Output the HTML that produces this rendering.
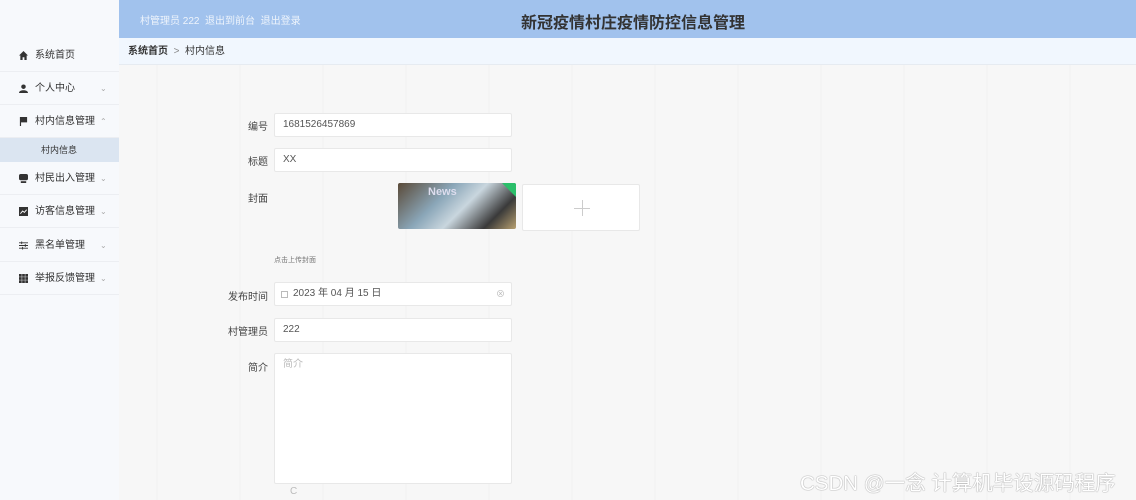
<!DOCTYPE html>
<html><head><meta charset="utf-8">
<style>
*{margin:0;padding:0;box-sizing:border-box}
body{width:1136px;height:500px;overflow:hidden;font-family:"Liberation Sans","Noto Sans CJK SC",sans-serif;background:#f6f6f6;position:relative}
.side{position:absolute;left:0;top:0;width:119px;height:500px;background:#f7f9fc}
.item{position:absolute;left:0;width:119px;height:33px;border-bottom:1px solid #eceef2;font-size:10px;color:#333;line-height:33px;padding-left:35px}
.item .ic{position:absolute;left:19px;top:12px;width:9px;height:9px}
.item .ar{position:absolute;left:100px;top:0;font-size:8px;color:#aaa}
.sub{position:absolute;left:0;top:138px;width:119px;height:24px;background:#dbe5f1;font-size:9px;color:#333;line-height:24px;padding-left:41px}
.head{position:absolute;left:119px;top:0;width:1017px;height:38px;background:#a1c2ed}
.head .l{position:absolute;left:21px;top:12px;font-size:10px;color:#eef4fc}
.head .t{position:absolute;left:402px;top:9px;font-size:16px;font-weight:bold;color:#333}
.bc{position:absolute;left:119px;top:38px;width:1017px;height:27px;background:#f1f7fe;border-bottom:1px solid #e6ebf1;font-size:10px;line-height:27px;padding-left:9px;color:#333}
.main{position:absolute;left:119px;top:65px;width:1017px;height:435px;background:
repeating-linear-gradient(90deg,rgba(0,0,0,0) 0 37px,rgba(0,0,0,.012) 37px 39px,rgba(0,0,0,0) 39px 83px),#f7f7f7}
.lab{position:absolute;font-size:10px;color:#444;text-align:right;width:60px}
.inp{position:absolute;left:274px;width:238px;height:24px;background:#fff;border:1px solid #e8e8e8;border-radius:2px;font-size:10px;color:#555;line-height:22px;padding-left:8px}
</style></head><body>
<div class="side">
<div class="item" style="top:39px"><svg class="ic" viewBox="0 0 10 10"><path d="M5 0L0 5h1.5v5h2.5V7h2v3h2.5V5H10z" fill="#333"/></svg>系统首页</div>
<div class="item" style="top:72px"><svg class="ic" viewBox="0 0 10 10"><circle cx="5" cy="3" r="2.5" fill="#333"/><path d="M0 10c0-4 10-4 10 0z" fill="#333"/></svg>个人中心<span class="ar">⌄</span></div>
<div class="item" style="top:105px"><svg class="ic" viewBox="0 0 10 10"><path d="M1 0v10h1.3V6H9V0z" fill="#333"/></svg>村内信息管理<span class="ar">⌃</span></div>
<div class="sub">村内信息</div>
<div class="item" style="top:162px"><svg class="ic" viewBox="0 0 10 10"><rect x="0" y="0" width="10" height="7" rx="2" fill="#333"/><rect x="2" y="8" width="6" height="2" fill="#333"/></svg>村民出入管理<span class="ar">⌄</span></div>
<div class="item" style="top:195px"><svg class="ic" viewBox="0 0 10 10"><rect width="10" height="10" fill="#333"/><path d="M1.5 7.5l2.5-3 2 1.5 2.5-3" stroke="#fff" fill="none"/></svg>访客信息管理<span class="ar">⌄</span></div>
<div class="item" style="top:229px"><svg class="ic" viewBox="0 0 10 10"><path d="M0 2h10M0 5h10M0 8h10" stroke="#333"/><path d="M3 0.5v3M7 3.5v3M4 6.5v3" stroke="#333"/></svg>黑名单管理<span class="ar">⌄</span></div>
<div class="item" style="top:262px"><svg class="ic" viewBox="0 0 10 10"><path d="M0 0h3v3H0zM3.5 0h3v3h-3zM7 0h3v3H7zM0 3.5h3v3H0zM3.5 3.5h3v3h-3zM7 3.5h3v3H7zM0 7h3v3H0zM3.5 7h3v3h-3zM7 7h3v3H7z" fill="#333"/></svg>举报反馈管理<span class="ar">⌄</span></div>
</div>
<div class="head"><div class="l">村管理员 222 &nbsp;退出到前台 &nbsp;退出登录</div><div class="t">新冠疫情村庄疫情防控信息管理</div></div>
<div class="bc"><b style="font-weight:bold">系统首页</b> &nbsp;<span style="color:#888">&gt;</span>&nbsp; 村内信息</div>
<div class="main"></div>
<div class="lab" style="left:208px;top:118px">编号</div>
<div class="inp" style="top:113px">1681526457869</div>
<div class="lab" style="left:208px;top:153px">标题</div>
<div class="inp" style="top:148px">XX</div>
<div class="lab" style="left:208px;top:190px">封面</div>
<div style="position:absolute;left:398px;top:183px;width:118px;height:46px;border-radius:2px;background:linear-gradient(135deg,#5a4a38 0%,#8aa6b8 35%,#c9d6de 55%,#3a3a3a 80%,#b8a070 100%);overflow:hidden"><div style="position:absolute;right:0;top:0;width:0;height:0;border-left:14px solid transparent;border-top:14px solid #2bbf6a"></div><span style="position:absolute;left:30px;top:3px;font-size:11px;color:#dde;font-weight:bold">News</span></div>
<div style="position:absolute;left:522px;top:184px;width:118px;height:47px;background:#fff;border:1px solid #e8e8e8;border-radius:2px"><div style="position:absolute;left:51px;top:23px;width:16px;height:1px;background:#ccc"></div><div style="position:absolute;left:59px;top:15px;width:1px;height:16px;background:#ccc"></div></div>
<div style="position:absolute;left:274px;top:255px;font-size:7px;color:#777">点击上传封面</div>
<div class="lab" style="left:208px;top:288px">发布时间</div>
<div class="inp" style="top:282px;padding-left:18px">2023 年 04 月 15 日<span style="position:absolute;left:6px;top:8px;width:7px;height:7px;border:1px solid #bbb"></span><span style="position:absolute;right:6px;top:0;font-size:9px;color:#bbb">⊗</span></div>
<div class="lab" style="left:208px;top:323px">村管理员</div>
<div class="inp" style="top:318px">222</div>
<div class="lab" style="left:208px;top:359px">简介</div>
<div class="inp" style="top:353px;height:131px;color:#bbb">简介</div>
<div style="position:absolute;left:290px;top:486px;font-size:10px;color:#bbb">C</div>
<div style="position:absolute;left:800px;top:466px;font-size:20.5px;color:#fff;text-shadow:0 0 1px #999,0 0 1px #999;white-space:nowrap">CSDN @一念 计算机毕设源码程序</div>
</body></html>
